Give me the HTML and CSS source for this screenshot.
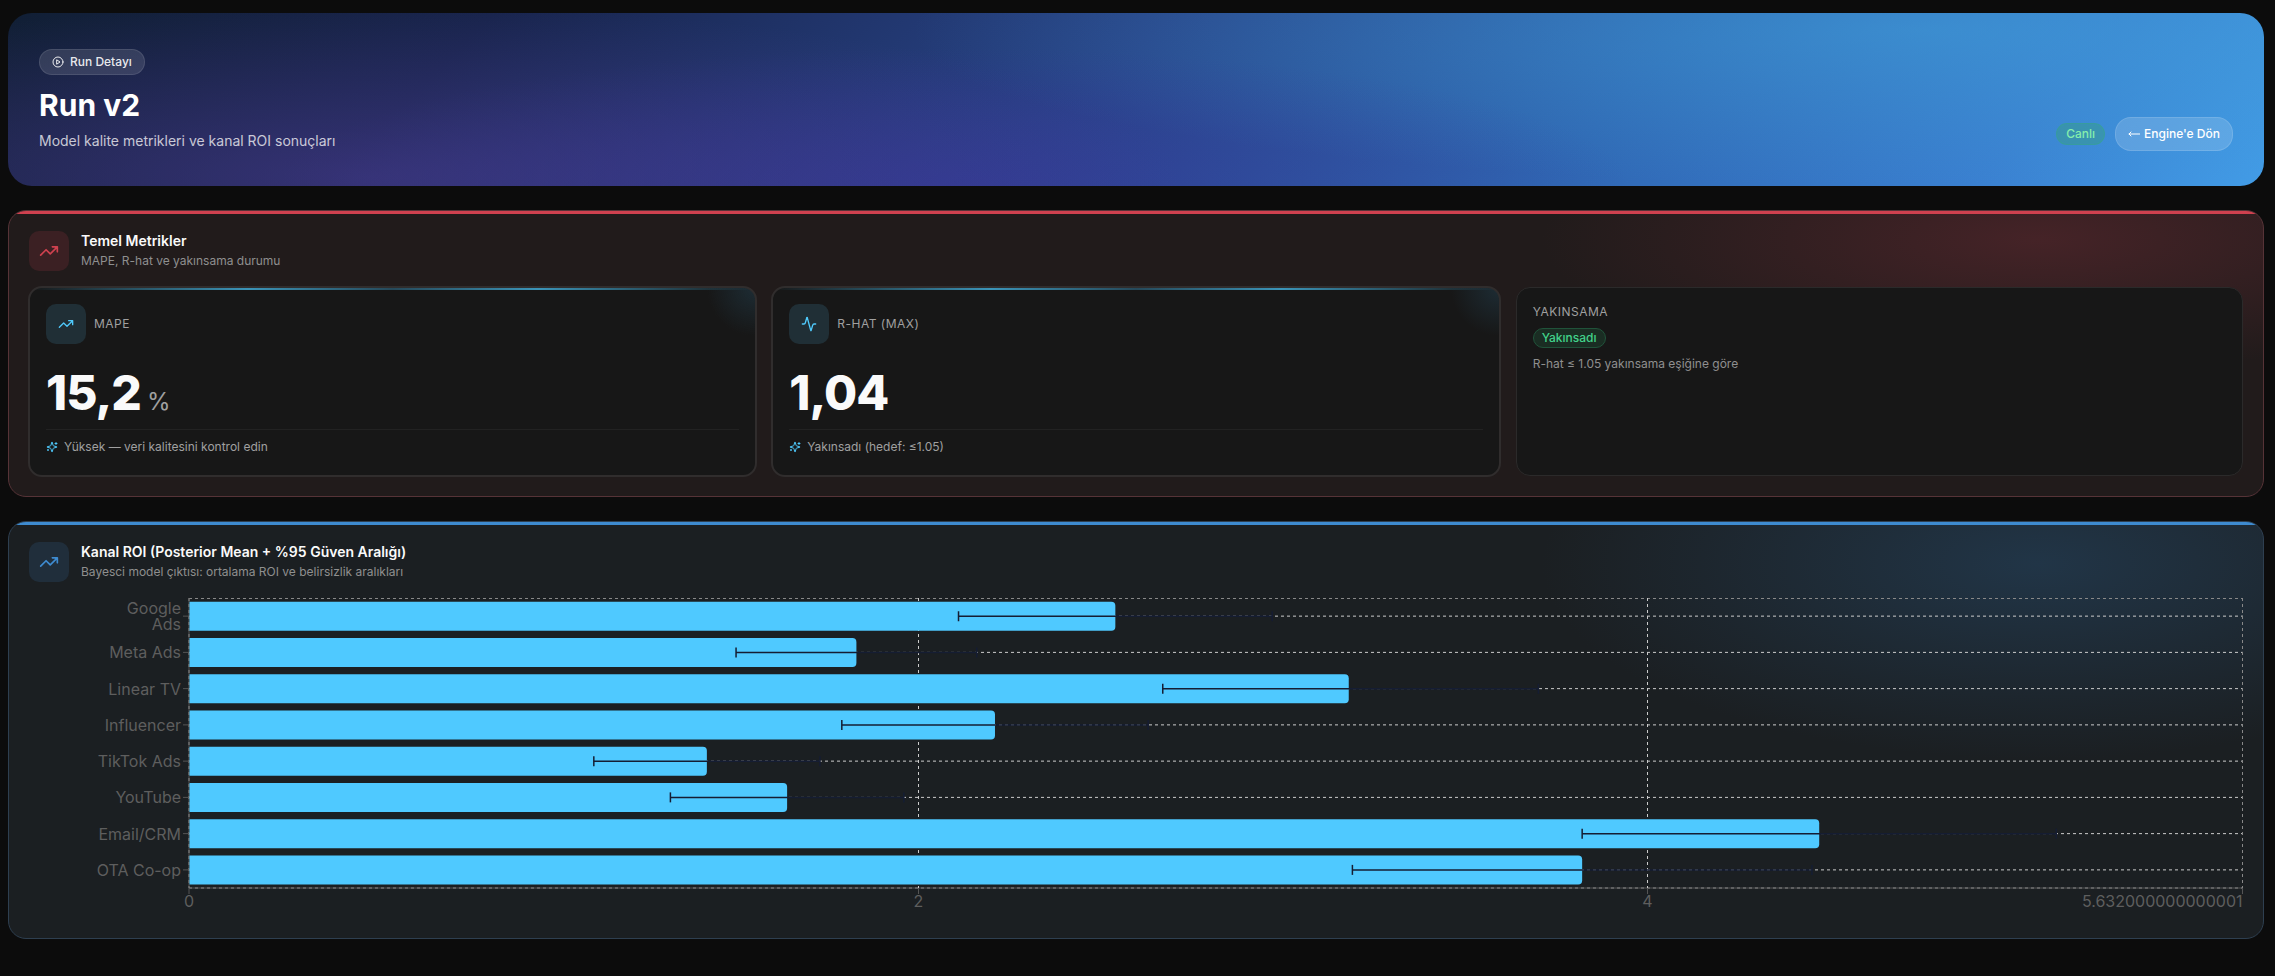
FILE: index.html
```html
<!DOCTYPE html>
<html lang="tr">
<head>
  <meta charset="UTF-8">
  <meta name="viewport" content="width=device-width, initial-scale=1">
  <title>Run v2</title>
  <link rel="stylesheet" href="styles.css">
</head>
<body>
<svg class="sprite" aria-hidden="true">
  <symbol id="trend" viewBox="0 0 24 24"><path d="M22 7l-8.5 8.5-5-5L2 17M16 7h6v6"/></symbol>
  <symbol id="pulse" viewBox="0 0 24 24"><path d="M22 12h-2.5a2 2 0 0 0-1.9 1.5l-2.4 8.4a.25.25 0 0 1-.5 0L9.3 2.2a.25.25 0 0 0-.5 0L6.4 10.5A2 2 0 0 1 4.5 12H2"/></symbol>
  <symbol id="play" viewBox="0 0 24 24"><circle cx="12" cy="12" r="10"/><path d="M10 8l6 4-6 4z"/></symbol>
  <symbol id="sparkles" viewBox="0 0 24 24"><path d="M9.937 15.5A2 2 0 0 0 8.5 14.063l-6.135-1.582a.5.5 0 0 1 0-.962L8.5 9.936A2 2 0 0 0 9.937 8.5l1.582-6.135a.5.5 0 0 1 .963 0L14.063 8.5A2 2 0 0 0 15.5 9.937l6.135 1.581a.5.5 0 0 1 0 .964L15.5 14.063a2 2 0 0 0-1.437 1.437l-1.582 6.135a.5.5 0 0 1-.963 0z"/><path d="M20 3v4M22 5h-4M4 17v2M5 18H3"/></symbol>
</svg>

<main class="page">
  <header class="hero">
    <div class="hero-text">
      <span class="hero-tag"><svg class="icon-xs"><use href="#play"/></svg>Run Detayı</span>
      <h1>Run v2</h1>
      <p>Model kalite metrikleri ve kanal ROI sonuçları</p>
    </div>
    <div class="hero-actions">
      <span class="live">Canlı</span>
      <a class="back" href="#"><svg class="arrow" viewBox="0 0 12 12"><path d="M12 6H1M3 4L1 6l2 2"/></svg>Engine'e Dön</a>
    </div>
  </header>

  <section class="panel red">
    <div class="panel-head">
      <span class="badge"><svg><use href="#trend"/></svg></span>
      <div>
        <h2>Temel Metrikler</h2>
        <p>MAPE, R-hat ve yakınsama durumu</p>
      </div>
    </div>
    <div class="metrics">
      <article class="metric">
        <div class="metric-head">
          <span class="badge"><svg><use href="#trend"/></svg></span>
          <h3>MAPE</h3>
        </div>
        <div class="value">15,2<small>%</small></div>
        <p class="note"><svg class="icon-xs"><use href="#sparkles"/></svg>Yüksek — veri kalitesini kontrol edin</p>
      </article>
      <article class="metric">
        <div class="metric-head">
          <span class="badge"><svg><use href="#pulse"/></svg></span>
          <h3>R-HAT (MAX)</h3>
        </div>
        <div class="value">1,04</div>
        <p class="note"><svg class="icon-xs"><use href="#sparkles"/></svg>Yakınsadı (hedef: ≤1.05)</p>
      </article>
      <article class="status">
        <h3>YAKINSAMA</h3>
        <span class="ok">Yakınsadı</span>
        <p>R-hat ≤ 1.05 yakınsama eşiğine göre</p>
      </article>
    </div>
  </section>

  <section class="panel blue">
    <div class="panel-head">
      <span class="badge"><svg><use href="#trend"/></svg></span>
      <div>
        <h2>Kanal ROI (Posterior Mean + %95 Güven Aralığı)</h2>
        <p>Bayesci model çıktısı: ortalama ROI ve belirsizlik aralıkları</p>
      </div>
    </div>
    <svg id="chart" class="chart" role="img" aria-label="Kanal ROI"></svg>
  </section>
</main>

<script src="chart.js"></script>
</body>
</html>
```
FILE: styles.css
```css
* {
  box-sizing: border-box;
  margin: 0;
  padding: 0;
}

body {
  background: #0c0c0c;
  color: #fafafa;
  font-family: Inter, "Liberation Sans", sans-serif;
  font-size: 12px;
  line-height: 16px;
}

svg {
  fill: none;
  stroke: currentColor;
  stroke-width: 2;
  stroke-linecap: round;
  stroke-linejoin: round;
}

.sprite {
  position: absolute;
  width: 0;
  height: 0;
}

.page {
  display: flex;
  flex-direction: column;
  gap: 24px;
  padding: 13px 11px 36px 8px;
}

.icon-xs {
  width: 12px;
  height: 12px;
}

/* hero */

.hero {
  display: flex;
  align-items: flex-end;
  justify-content: space-between;
  padding: 35px 31px;
  min-height: 173px;
  border-radius: 24px;
  background:
    radial-gradient(ellipse 36% 100% at 16% 95%, rgba(82, 64, 156, 0.5), transparent),
    radial-gradient(ellipse 30% 80% at 42% 100%, rgba(58, 50, 155, 0.5), transparent),
    radial-gradient(ellipse 45% 90% at 85% 10%, rgba(66, 165, 220, 0.5), transparent),
    linear-gradient(135deg, #111f35 0%, #18244c 20%, #284488 48%, #2f66b2 70%, #3a80d0 88%, #429ce6 100%);
}

.hero-text {
  display: flex;
  flex-direction: column;
  align-items: flex-start;
}

.hero-tag {
  display: flex;
  align-items: center;
  gap: 6px;
  padding: 4px 12px;
  border: 1px solid rgba(255, 255, 255, 0.1);
  border-radius: 13px;
  background: rgba(255, 255, 255, 0.12);
  color: rgba(255, 255, 255, 0.9);
  font-weight: 500;
}

.hero h1 {
  margin-top: 12px;
  color: #fff;
  font-size: 30px;
  line-height: 36px;
}

.hero p {
  margin-top: 8px;
  color: rgba(255, 255, 255, 0.75);
  font-size: 14px;
  line-height: 20px;
}

.hero-actions {
  display: flex;
  align-items: center;
  gap: 10px;
}

.live {
  padding: 2px 9px;
  border: 1px solid rgba(52, 180, 120, 0.3);
  border-radius: 11px;
  background: rgba(52, 160, 120, 0.4);
  color: #86efac;
  font-weight: 500;
}

.back {
  display: flex;
  align-items: center;
  gap: 4px;
  padding: 8px 12px;
  border: 1px solid rgba(255, 255, 255, 0.12);
  border-radius: 16px;
  background: rgba(255, 255, 255, 0.16);
  color: #fff;
  font-weight: 500;
  text-decoration: none;
}

.arrow {
  width: 12px;
  height: 12px;
  stroke-width: 1;
}

/* panels */

.panel {
  position: relative;
  overflow: hidden;
  padding: 20px;
  border: 1px solid;
  border-radius: 18px;
}

.panel::before {
  content: "";
  position: absolute;
  inset: 0 0 auto;
  height: 3px;
  background: var(--accent);
}

.red {
  --accent: #cf414f;
  --tint: #3b2023;
  border-color: #563337;
  background: radial-gradient(ellipse 22% 47% at 90% 10%, #452327, transparent) #211b1b;
}

.blue {
  --accent: #3e8bd0;
  --tint: #202e3b;
  border-color: #2e3f50;
  background: radial-gradient(ellipse 22% 47% at 90% 10%, #213547, transparent) #1b1f22;
}

.panel-head {
  display: flex;
  align-items: center;
  gap: 12px;
  margin-bottom: 16px;
}

.panel-head h2 {
  font-size: 14px;
  font-weight: 600;
  line-height: 20px;
}

.panel-head p {
  color: #8f8f8f;
  line-height: 20px;
}

.badge {
  display: grid;
  place-items: center;
  width: 40px;
  height: 40px;
  border-radius: 10px;
  background: var(--tint);
  color: var(--accent);
}

.badge svg {
  width: 20px;
  height: 20px;
}

/* metric cards */

.metrics {
  display: grid;
  grid-template-columns: repeat(3, 1fr);
  gap: 16px;
}

.metric,
.status {
  border: 1px solid #2b2a2a;
  border-radius: 14px;
  background: #171717;
}

.metric {
  --accent: #4fc9fb;
  --tint: #202f36;
  position: relative;
  overflow: hidden;
  margin: -1px;
  padding: 16px 16px 20px;
  border: 2px solid #302d2d;
  background: radial-gradient(circle 48px at 100% 0, #1d2c34, transparent) #171717;
}

.metric::before {
  content: "";
  position: absolute;
  inset: 0 0 auto;
  height: 2px;
  background: linear-gradient(90deg, transparent, #3b94b8 30%, #26495a 50%, #3b94b8 70%, transparent);
}

.metric-head {
  display: flex;
  align-items: center;
  gap: 8px;
}

.metric .badge svg {
  width: 16px;
  height: 16px;
}

.metric h3,
.status h3 {
  color: #a0a0a0;
  font-size: 12px;
  font-weight: 400;
  letter-spacing: 0.5px;
}

.value {
  display: flex;
  align-items: baseline;
  gap: 6px;
  margin: 25px 0 12px;
  font-size: 48px;
  font-weight: 800;
  line-height: 48px;
  letter-spacing: -1px;
}

.value small {
  color: #a0a0a0;
  font-size: 24px;
  font-weight: 400;
  line-height: 24px;
}

.note {
  display: flex;
  align-items: center;
  gap: 6px;
  padding-top: 9px;
  border-top: 1px solid #222;
  color: #a0a0a0;
}

.note svg {
  color: #4fc9fb;
}

.status {
  display: flex;
  flex-direction: column;
  align-items: flex-start;
  padding: 16px;
}

.ok {
  margin: 8px 0;
  padding: 1px 8px;
  border: 1px solid #20533a;
  border-radius: 10px;
  background: #1a2d23;
  color: #42d28a;
  font-weight: 500;
}

.status p {
  color: #8f8f8f;
}

/* chart */

.chart {
  display: block;
  width: 100%;
  height: 320px;
  stroke: none;
}

.chart text {
  fill: #5e5e5e;
  font-size: 16px;
}

.chart .label {
  text-anchor: end;
}

.chart .tick {
  text-anchor: middle;
}

.chart line {
  stroke-width: 1;
  stroke-linecap: butt;
}

.chart .grid {
  stroke: #ccc;
  stroke-dasharray: 3 3;
}

.chart .edge {
  stroke: #888;
}

.chart .axis {
  stroke: #555;
}

.chart .bar {
  fill: #4fc9ff;
}

.chart .error {
  stroke: #151d33;
  stroke-width: 1.5;
}
```
FILE: chart.js
```javascript
var chart = document.getElementById('chart')

var channels = [
  { name: ['Google', 'Ads'], roi: 2.54, low: 2.11, high: 2.97 },
  { name: ['Meta Ads'], roi: 1.83, low: 1.5, high: 2.16 },
  { name: ['Linear TV'], roi: 3.18, low: 2.67, high: 3.7 },
  { name: ['Influencer'], roi: 2.21, low: 1.79, high: 2.63 },
  { name: ['TikTok Ads'], roi: 1.42, low: 1.11, high: 1.73 },
  { name: ['YouTube'], roi: 1.64, low: 1.32, high: 1.96 },
  { name: ['Email/CRM'], roi: 4.47, low: 3.82, high: 5.12 },
  { name: ['OTA Co-op'], roi: 3.82, low: 3.19, high: 4.45 }
]
var max = 5.12 * 1.1
var left = 160
var height = 290

function add (tag, attrs, text) {
  var el = document.createElementNS('http://www.w3.org/2000/svg', tag)
  for (var key in attrs) el.setAttribute(key, attrs[key])
  if (text !== undefined) el.textContent = text
  chart.appendChild(el)
}

function line (cls, x1, y1, x2, y2) {
  add('line', { class: cls, x1: x1, y1: y1, x2: x2, y2: y2 })
}

function draw () {
  chart.innerHTML = ''
  var right = chart.clientWidth
  var band = height / channels.length
  var x = function (v) { return left + v / max * (right - left) }

  line('grid edge', left, 0.5, right, 0.5)
  channels.forEach(function (c, i) {
    var mid = (i + 0.5) * band
    line('grid', left, mid, right, mid)
  })
  line('axis', left, height, right, height)
  line('axis', left, 0, left, height)
  line('grid edge', left, height, right, height)
  ;[0, 2, 4, max].forEach(function (v) {
    var end = v === max
    var px = end ? right - 0.5 : v ? Math.floor(x(v)) + 0.5 : left
    line(end || !v ? 'grid edge' : 'grid', px, 0, px, height)
    line('axis', px, height, px, height + 6)
    add('text', { class: end ? 'label' : 'tick', x: px, y: height + 19 }, end ? '5.632000000000001' : v)
  })

  channels.forEach(function (c, i) {
    var mid = (i + 0.5) * band
    var end = x(c.roi)
    var top = mid - 14.5
    add('path', { class: 'bar', d: `M${left + 0.5} ${top}H${end - 4}q4 0 4 4v21q0 4 -4 4H${left + 0.5}z` })
    line('error', x(c.low), mid, x(c.high), mid)
    line('error', x(c.low), mid - 5, x(c.low), mid + 5)
    line('error', x(c.high), mid - 5, x(c.high), mid + 5)
    line('axis', left - 6, mid, left, mid)
    c.name.forEach(function (word, n) {
      add('text', { class: 'label', x: left - 8, y: mid + 6 + (n - (c.name.length - 1) / 2) * 16 }, word)
    })
  })
}

draw()
window.addEventListener('resize', draw)
```
